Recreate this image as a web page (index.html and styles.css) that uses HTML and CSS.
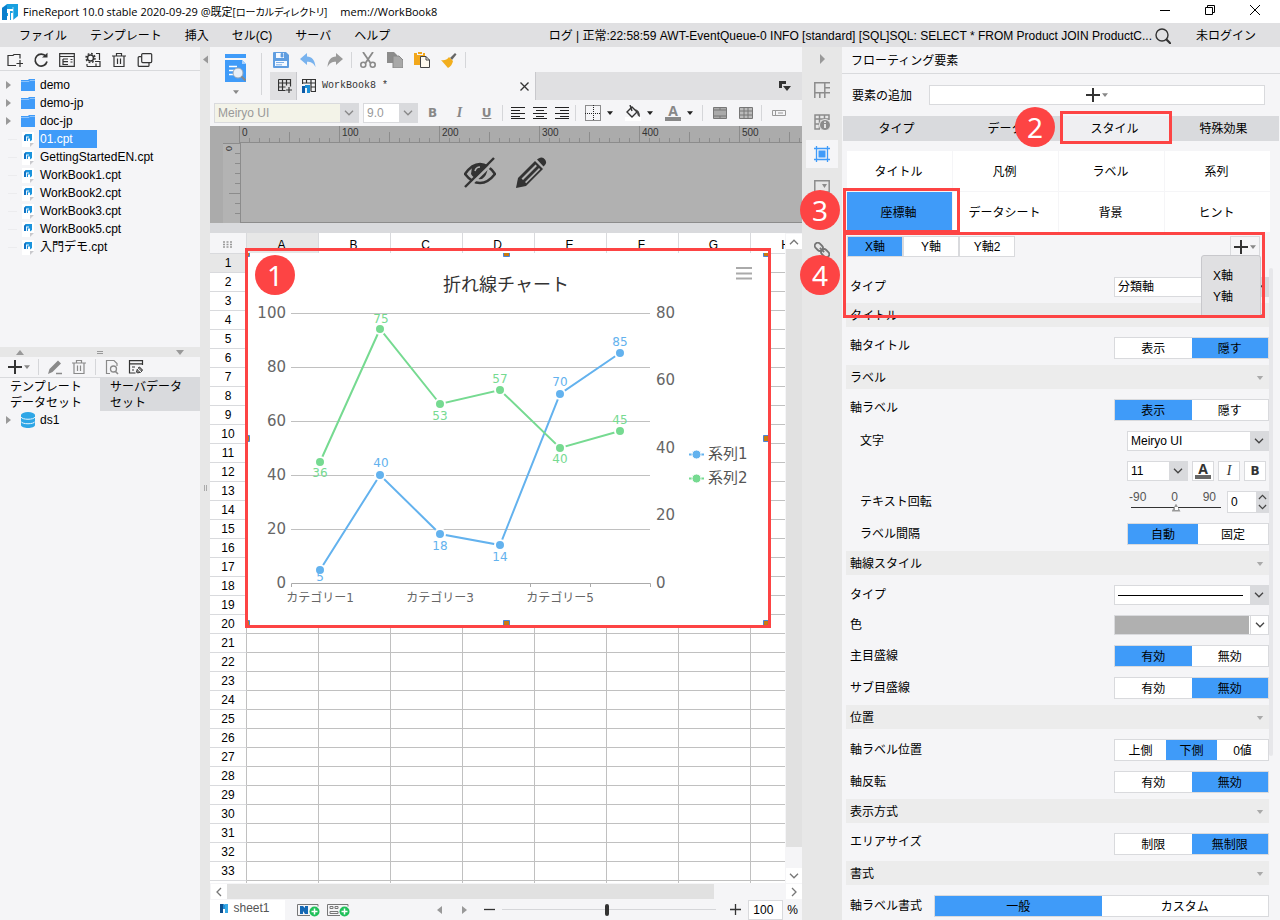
FILE: index.html
```html
<!DOCTYPE html>
<html lang="ja">
<head>
<meta charset="utf-8">
<title>FineReport 10.0</title>
<link rel="stylesheet" href="styles.css">
</head>
<body>
<svg class="defs" aria-hidden="true">
  <symbol id="logo" viewBox="0 0 16 16"><path d="M5 0h11v12l-5 4V9H9v7H0V4z" fill="#18a0e0"/><path d="M0 4 5 1v4h3v4H5v7H0z" fill="#0a7dcc"/><path d="M5 5h6v2H8v9H5v-4h1V9H5z" fill="#fff"/><path d="M11 3v13" stroke="#fff" stroke-width=".6"/></symbol>
  <symbol id="folder" viewBox="0 0 14 12"><path d="M0 1h7l1-1h6v12H0z" fill="#3f9bf9"/><path d="M0 2.500h8l1-1h5" stroke="#8cc3fb" fill="none"/></symbol>
  <symbol id="doc" viewBox="0 0 13 15"><path d="M0 0h12v11l-4 4H0z" fill="#fff"/><path d="M2 4 4 2h6v6L8 9.500V6.500H6V9H2z" fill="#1a94dd"/><path d="M2 4l2-2v7H2z" fill="#1273c4"/><path d="M4 4.500h3v1H5V9H4z" fill="#e8f4ff"/><path d="M8 11h4l-4 4z" fill="#c8c8cc"/></symbol>
  <symbol id="chev" viewBox="0 0 10 6"><path d="M1 .8 5 4.800 9 .8" fill="none" stroke="currentColor" stroke-width="1.300"/></symbol>
  <symbol id="tri" viewBox="0 0 8 5"><path d="M0 0h8L4 5z" fill="currentColor"/></symbol>
  <symbol id="trash" viewBox="0 0 16 16"><path d="M1 4h14M5.500 4V1.500h5V4M3 4v10.500h10V4M6.500 6.500v5.500M9.500 6.500v5.500" fill="none" stroke="currentColor" stroke-width="1.200"/></symbol>
  <symbol id="plus" viewBox="0 0 14 14"><path d="M7 0v14M0 7h14" stroke="#333" stroke-width="2"/></symbol>
  <symbol id="addsheet" viewBox="0 0 24 14"><path d="M21 1.500H.5v11H13M21 1.500v2" fill="none" stroke="#777"/><circle cx="17.500" cy="8.500" r="5" fill="#1fc05a"/><path d="M17.500 5.500v6M14.500 8.500h6" stroke="#fff" stroke-width="1.500"/></symbol>
</svg>
<div class="app">
  <header class="titlebar">
    <svg class="titlebar__logo"><use href="#logo"/></svg>
    <span class="titlebar__text">FineReport 10.0 stable 2020-09-29 @既定<small>[ローカルディレクトリ]</small></span>
    <span class="titlebar__text">mem://WorkBook8</span>
    <div class="winctl">
      <button aria-label="最小化"><svg viewBox="0 0 10 10"><path d="M0 5.500h10" stroke="#000"/></svg></button>
      <button aria-label="元に戻す"><svg viewBox="0 0 10 10"><path d="M.5 2.500h7v7h-7zM2.500 2.500v-2h7v7h-2" fill="none" stroke="#000"/></svg></button>
      <button aria-label="閉じる"><svg viewBox="0 0 10 10"><path d="M0 0l10 10M10 0 0 10" stroke="#000"/></svg></button>
    </div>
  </header>
  <nav class="menubar">
    <button>ファイル</button><button>テンプレート</button><button>挿入</button><button>セル(C)</button><button>サーバ</button><button>ヘルプ</button>
    <span class="menubar__log">ログ | 正常:22:58:59 AWT-EventQueue-0 INFO [standard] [SQL]SQL: SELECT * FROM Product JOIN ProductC...</span>
    <button class="menubar__search" aria-label="検索"><svg viewBox="0 0 16 16"><circle cx="7" cy="7" r="6" fill="none" stroke="#333" stroke-width="1.400"/><path d="m11 11 5 5" stroke="#333" stroke-width="2.200"/></svg></button>
    <button>未ログイン</button>
  </nav>

  <div class="main">
    <aside class="left">
      <div class="lefttools">
        <button aria-label="新規フォルダ"><svg viewBox="0 0 16 16"><path d="M9 13.500H1V3.500h5l1-1h6v4M1 3.500M13 8v7M9.500 11.500h7" fill="none" stroke="#333" stroke-width="1.200"/></svg></button>
        <button aria-label="更新"><svg viewBox="0 0 16 16"><path d="M13 4.500A6 6 0 1 0 14 9.500" fill="none" stroke="#333" stroke-width="1.700"/><path d="M9 5.500h5.500V.8z" fill="#333"/></svg></button>
        <button aria-label="場所"><svg viewBox="0 0 16 16"><path d="M.7 1.700h14.600v12.600H.7zM.7 4.500h14.600M4 7h5M4 7v5.500h5M4 9.700h5M11.500 7.500h2M11.500 10h2" fill="none" stroke="#333" stroke-width="1.200"/></svg></button>
        <button aria-label="設定"><svg viewBox="0 0 16 16"><circle cx="5.500" cy="6" r="3" fill="none" stroke="#333" stroke-width="1.500"/><circle cx="5.500" cy="6" r="4.500" fill="none" stroke="#333" stroke-width="1.500" stroke-dasharray="1.800 1.730"/><path d="M11 1.500h3.500V8M10 9.500h5v5H2M11 14.500v-3M2 12v2.500" fill="none" stroke="#333" stroke-width="1.200"/></svg></button>
        <button aria-label="削除"><svg class="dark"><use href="#trash"/></svg></button>
        <button aria-label="複製"><svg viewBox="0 0 16 16"><rect x="4.700" y="1.600" width="10" height="9" rx="1" fill="none" stroke="#333" stroke-width="1.200"/><path d="M4.500 4.600H2.200a1 1 0 0 0-1 1v7.800a1 1 0 0 0 1 1H11a1 1 0 0 0 1-1v-2.500" fill="none" stroke="#333" stroke-width="1.200"/></svg></button>
      </div>
      <ul class="tree tree--files">
        <li><i class="twist"></i><svg class="ico-folder"><use href="#folder"/></svg><span>demo</span></li>
        <li><i class="twist"></i><svg class="ico-folder"><use href="#folder"/></svg><span>demo-jp</span></li>
        <li><i class="twist"></i><svg class="ico-folder"><use href="#folder"/></svg><span>doc-jp</span></li>
        <li><i class="stub"></i><svg class="ico-doc"><use href="#doc"/></svg><span class="is-selected">01.cpt</span></li>
        <li><i class="stub"></i><svg class="ico-doc"><use href="#doc"/></svg><span>GettingStartedEN.cpt</span></li>
        <li><i class="stub"></i><svg class="ico-doc"><use href="#doc"/></svg><span>WorkBook1.cpt</span></li>
        <li><i class="stub"></i><svg class="ico-doc"><use href="#doc"/></svg><span>WorkBook2.cpt</span></li>
        <li><i class="stub"></i><svg class="ico-doc"><use href="#doc"/></svg><span>WorkBook3.cpt</span></li>
        <li><i class="stub"></i><svg class="ico-doc"><use href="#doc"/></svg><span>WorkBook5.cpt</span></li>
        <li><i class="stub"></i><svg class="ico-doc"><use href="#doc"/></svg><span>入門デモ.cpt</span></li>
      </ul>
      <div class="hsplit"><svg class="flip"><use href="#tri"/></svg><b></b><svg><use href="#tri"/></svg></div>
      <div class="datatools">
        <button class="addbtn" aria-label="追加"><svg class="plus"><use href="#plus"/></svg><svg class="caret"><use href="#tri"/></svg></button>
        <i class="sep"></i>
        <button aria-label="編集"><svg viewBox="0 0 16 16"><path d="m1 15 1.500-5L11 1.500l3 3L5.500 13z" fill="#8a8a8a"/><path d="M9 14.500h6" stroke="#8a8a8a" stroke-width="1.500"/></svg></button>
        <button aria-label="削除"><svg class="grey"><use href="#trash"/></svg></button>
        <i class="sep"></i>
        <button aria-label="プレビュー"><svg viewBox="0 0 16 16"><path d="M6 14.500H2.500V1.500H10l3 3V7" fill="none" stroke="#8a8a8a" stroke-width="1.200"/><circle cx="9.500" cy="10" r="3" fill="none" stroke="#8a8a8a" stroke-width="1.300"/><path d="m11.500 12.500 2.500 2.500" stroke="#8a8a8a" stroke-width="1.600"/></svg></button>
        <button aria-label="接続"><svg viewBox="0 0 16 16"><path d="M14.500 6V1.700H1.500V14h6M1.500 4.800h13M4 8h3M4 11h2" fill="none" stroke="#333" stroke-width="1.200"/><path d="m8.500 13 1-3.500 2-1.500 3 3-1.500 2-3.500 1z" fill="#888" stroke="#333"/><path d="m9 9 5 5" stroke="#f5f5f7"/></svg></button>
      </div>
      <div class="datatabs"><button>テンプレート<br>データセット</button><button class="is-off">サーバデータ<br>セット</button></div>
      <ul class="tree">
        <li><i class="twist"></i><svg class="ico-db" viewBox="0 0 14 16"><path d="M0 3v10c0 4 14 4 14 0V3z" fill="#2ea6e6"/><ellipse cx="7" cy="3" rx="7" ry="3" fill="#2ea6e6"/><path d="M0 5c1 3 13 3 14 0M0 9.500c1 3 13 3 14 0" fill="none" stroke="#e8f5fd"/></svg><span>ds1</span></li>
      </ul>
    </aside>
    <div class="vsplit"><svg viewBox="0 0 5 8"><path d="M5 0v8L0 4z" fill="#999"/></svg><b></b></div>

    <section class="center">
      <div class="topbar">
        <button class="preview" aria-label="プレビュー">
          <svg class="preview__icon" viewBox="0 0 21 28"><path d="M0 0h21v4H0zM0 6h17l4 4v18H0z" fill="#3f9bf9"/><path d="M17 6v4h4z" fill="#a9d1fd"/><path d="M4 12.500h8M4 16.500h5M4 20.500h5" stroke="#fff" stroke-width="1.500"/><circle cx="13" cy="19" r="5" fill="#e8eef6" stroke="#9aa7b8"/><path d="m16.500 22.500 4 4" stroke="#888" stroke-width="2"/></svg>
          <svg class="caret"><use href="#tri"/></svg>
        </button>
        <i class="topbar__sep"></i>
        <div class="topbar__rows">
          <div class="tools">
            <button aria-label="保存"><svg viewBox="0 0 16 16"><path d="M0 1q0-1 1-1h12l3 3v12q0 1-1 1H1q-1 0-1-1z" fill="#5f9de0"/><path d="M3 1h8v5H3zM2 9h12v5H2z" fill="#f5f9ff"/><path d="M8 1.500h2V5H8zM3 10.500h8M3 12.800h6" fill="#5f9de0" stroke="#5f9de0" stroke-width=".8"/></svg></button>
            <button aria-label="元に戻す"><svg viewBox="0 0 16 16"><path d="M0 7 7 1v3.500c5 0 8 4 8.500 10.500C13.500 11 11 9.700 7 9.700V13z" fill="#78b2ee"/></svg></button>
            <button aria-label="やり直し"><svg viewBox="0 0 16 16"><path d="M16 7 9 1v3.500C4 4.500 1 8.500.5 15 2.500 11 5 9.700 9 9.700V13z" fill="#9a9a9a"/></svg></button>
            <i class="sep"></i>
            <button aria-label="切り取り"><svg viewBox="0 0 16 16"><path d="m3 0 7.500 11M13 0 5.500 11" stroke="#8a8a8a" stroke-width="1.800"/><circle cx="3.300" cy="12.700" r="2.500" fill="none" stroke="#8a8a8a" stroke-width="1.600"/><circle cx="12.700" cy="12.700" r="2.500" fill="none" stroke="#8a8a8a" stroke-width="1.600"/></svg></button>
            <button aria-label="コピー"><svg viewBox="0 0 16 16"><path d="M0 0h7l3 3v8H0z" fill="#8c8c8c"/><path d="M6 4h6l4 4v8H6z" fill="#a8a8a8" stroke="#888"/></svg></button>
            <button aria-label="貼り付け"><svg viewBox="0 0 16 16"><path d="M0 1h3v2h6V1h2v12H0z" fill="#f2a71b"/><path d="M4 0h4v2H4z" fill="#f2a71b"/><path d="M6.500 4.500H12L15.500 8v7.500h-9z" fill="#fffaf0" stroke="#444"/><path d="M12 4.500V8h3.500" fill="none" stroke="#444"/></svg></button>
            <button aria-label="書式コピー"><svg viewBox="0 0 16 16"><path d="m9 6 5-5 1.500 1.500L11 8z" fill="#666"/><path d="M0 8q5 1 8-3l4 4q-1 5-5 7z" fill="#f2ae1d"/></svg></button>
            <i class="sep"></i>
          </div>
          <div class="tabs">
            <button class="tabs__new" aria-label="新規"><svg viewBox="0 0 14 14"><path d="M.5.5h12v7M.5.5v11h7M.5 4h12M.5 8h7M4.500.5v11M8.500.5v6M11 8v6M8 11h6" fill="none" stroke="#333" stroke-width="1.200"/></svg></button>
            <div class="tab"><svg viewBox="0 0 14 14"><path d="M.5 5V.5h13v12H9M.5 4h13M9 8h4M4.500.5V4M9 .5v12" fill="none" stroke="#333" stroke-width="1.200"/><path d="M0 7h3v7H0z" fill="#0c5ba8"/><path d="M3 9V6h5v8H5V9z" fill="#1c8fd6"/></svg><span class="tab__name">WorkBook8 *</span><button aria-label="閉じる"><svg class="tab__x" viewBox="0 0 9 9"><path d="m.5.5 8 8M8.500.5l-8 8" stroke="#333" stroke-width="1.300"/></svg></button></div>
            <button class="tabs__list" aria-label="一覧"><svg viewBox="0 0 12 10"><path d="M0 0h7v3H3v4H0zM4 5h8l-4 5z" fill="#333"/></svg></button>
          </div>
        </div>
      </div>
      <div class="format">
        <span class="combo combo--font"><select aria-label="フォント"><option>Meiryo UI</option></select><svg><use href="#chev"/></svg></span>
        <span class="combo combo--size"><select aria-label="サイズ"><option>9.0</option></select><svg><use href="#chev"/></svg></span>
        <button class="letter" aria-label="太字"><b>B</b></button><button class="letter" aria-label="斜体"><em>I</em></button><button class="letter" aria-label="下線"><u>U</u></button>
        <i class="sep"></i>
        <button class="al" aria-label="左揃え"><svg viewBox="0 0 14 12"><path d="M0 .5h14M0 3.500h9M0 6.500h14M0 9.500h9M0 11.500h14" stroke="#222"/></svg></button>
        <button class="al" aria-label="中央揃え"><svg viewBox="0 0 14 12"><path d="M0 .5h14M3 3.500h8M0 6.500h14M3 9.500h8M0 11.500h14" stroke="#222"/></svg></button>
        <button class="al" aria-label="右揃え"><svg viewBox="0 0 14 12"><path d="M0 .5h14M5 3.500h9M0 6.500h14M5 9.500h9M0 11.500h14" stroke="#222"/></svg></button>
        <i class="sep"></i>
        <button class="drop" aria-label="罫線"><svg viewBox="0 0 16 16"><path d="M.5.500h15v15H.5zM8.500 0v16M0 8.500h16" fill="none" stroke="#222" stroke-dasharray="1 1"/></svg><svg class="caret"><use href="#tri"/></svg></button>
        <button class="drop" aria-label="塗りつぶし"><svg viewBox="0 0 16 16"><path d="M0 12h16v4H0z" fill="#fff"/><path d="m2 7 5-5 5 5-5 5zM5 0l2 6" fill="none" stroke="#333" stroke-width="1.400"/><path d="M10 4q5 1 5 8-3-1-3-5z" fill="#444"/></svg><svg class="caret"><use href="#tri"/></svg></button>
        <button class="drop" aria-label="文字色"><span class="fontcolor">A</span><svg class="caret"><use href="#tri"/></svg></button>
        <i class="sep"></i>
        <button class="cellbtn" aria-label="結合"><svg viewBox="0 0 14 12"><path d="M.5.500h13v11H.5z" fill="#aaa" stroke="#777"/><path d="M0 3h14M0 9h14M7 0v3M7 9v3" stroke="#777"/></svg></button>
        <button class="cellbtn" aria-label="分割"><svg viewBox="0 0 14 12"><path d="M.5.500h13v11H.5z" fill="#bbb" stroke="#777"/><path d="M0 4h14M0 8h14M5 0v12M9 0v12" stroke="#777"/></svg></button>
        <i class="sep"></i>
        <button class="cellbtn" aria-label="ウィジェット"><svg viewBox="0 0 14 12"><path d="M.5 3.500h13v5H.5zM3.500 4v4M6 6h5" fill="none" stroke="#999"/></svg></button>
      </div>

      <div class="stage">
        <div class="ruler">
          <svg class="ruler__ticks" aria-hidden="true">
            <defs><pattern id="hticks" width="100" height="17" patternUnits="userSpaceOnUse"><path d="M.5 0v17M10.500 12v5M20.500 12v5M30.500 12v5M40.500 12v5M50.500 6v11M60.500 12v5M70.500 12v5M80.500 12v5M90.500 12v5" stroke="#8c8c8c"/></pattern></defs>
            <rect width="100%" height="17" fill="url(#hticks)"/>
          </svg>
          <div class="ruler__nums"><span>0</span><span>100</span><span>200</span><span>300</span><span>400</span><span>500</span></div>
        </div>
        <div class="stage__row">
          <svg class="vruler" viewBox="0 0 17 80" preserveAspectRatio="xMinYMin slice"><path d="M0 .5h17M12 10.500h5M12 20.500h5M12 30.500h5M12 40.500h5M6 50.500h11M12 60.500h5M12 70.500h5" stroke="#8c8c8c"/><text class="vruler__num" transform="translate(9 3) rotate(-90)" text-anchor="end">0</text></svg>
          <div class="stage__body">
            <button aria-label="非表示"><svg viewBox="0 0 32 32"><path d="M1 17Q8 7 16 7t15 10q-7 9-15 9T1 17z" fill="none" stroke="#333" stroke-width="2.600"/><path d="M8 10q8-6 16 0-1 9-6 12-8 1-11-5z" fill="#333"/><path d="M11 14q1-4 5-4" fill="none" stroke="#b1b1b1" stroke-width="1.500"/><path d="M3 31 32 3" stroke="#b1b1b1" stroke-width="3"/><path d="M1 30 30 1" stroke="#333" stroke-width="2.400"/></svg></button>
            <button aria-label="編集"><svg viewBox="0 0 32 32"><path d="m1 31 2-10L20 4l8 8L11 29z" fill="#333"/><path d="m6.500 21.500 14-14 1.500 1.500-14 14zM10 25l14-14 1.200 1.200-14 14z" fill="#b1b1b1"/><path d="m22 2.500 1.500-1q4-2.500 6.500 1t-.5 6l-1 1z" fill="#333"/></svg></button>
          </div>
        </div>
      </div>

      <div class="sheetarea">
        <div class="sheet">
          <table class="grid" id="grid"></table>
          <div class="float">
            <svg class="chart" viewBox="246 253 524 374" role="img" aria-label="折れ線チャート">
              <rect x="246" y="253" width="524" height="374" fill="#fff"/>
              <path d="M736 268h16M736 273.500h16M736 278.500h16" stroke="#aaa" stroke-width="1.800"/>
              <text class="chart__title" x="506" y="291">折れ線チャート</text>
              <path d="M291 313.500h359M291 367.500h359M291 421.500h359M291 475.500h359M291 529.500h359" stroke="#c0c0c0"/>
              <path d="M291.500 587v-3.500h359v3.500M530.500 583v4M590.500 583v4" stroke="#aaa" fill="none"/>
              <g class="chart__axis chart__axis--l"><text x="286" y="318">100</text><text x="286" y="372">80</text><text x="286" y="426">60</text><text x="286" y="480">40</text><text x="286" y="534">20</text><text x="286" y="588">0</text></g>
              <g class="chart__axis"><text x="656" y="318">80</text><text x="656" y="385">60</text><text x="656" y="453">40</text><text x="656" y="520">20</text><text x="656" y="588">0</text></g>
              <g class="chart__cat"><text x="320" y="602">カテゴリー1</text><text x="440" y="602">カテゴリー3</text><text x="560" y="602">カテゴリー5</text></g>
              <g class="blue"><polyline points="320,570 380,475 440,534 500,545 560,394 620,353"/><circle cx="320" cy="570" r="5"/><circle cx="380" cy="475" r="5"/><circle cx="440" cy="534" r="5"/><circle cx="500" cy="545" r="5"/><circle cx="560" cy="394" r="5"/><circle cx="620" cy="353" r="5"/>
                <text x="320" y="581">5</text><text x="381" y="467">40</text><text x="440" y="550">18</text><text x="500" y="561">14</text><text x="560" y="386">70</text><text x="620" y="346">85</text></g>
              <g class="green"><polyline points="320,462 380,329 440,404 500,390 560,448 620,431"/><circle cx="320" cy="462" r="5"/><circle cx="380" cy="329" r="5"/><circle cx="440" cy="404" r="5"/><circle cx="500" cy="390" r="5"/><circle cx="560" cy="448" r="5"/><circle cx="620" cy="431" r="5"/>
                <text x="320" y="477">36</text><text x="381" y="323">75</text><text x="440" y="420">53</text><text x="500" y="383">57</text><text x="560" y="463">40</text><text x="620" y="424">45</text></g>
              <path d="M689 454.500h15" stroke="#63b2ee" stroke-width="2"/><circle cx="696.500" cy="454.500" r="4.500" fill="#63b2ee" stroke="#fff"/><text class="chart__legend" x="708" y="459">系列1</text>
              <path d="M689 478.500h15" stroke="#76da91" stroke-width="2"/><circle cx="696.500" cy="478.500" r="4.500" fill="#76da91" stroke="#fff"/><text class="chart__legend" x="708" y="483">系列2</text>
              <g fill="#c87a10" stroke="#4a86d8"><path d="M243.500 250.500h6v6h-6zM503.500 250.500h6v6h-6zM763.500 250.500h6v6h-6zM243.500 435.500h6v6h-6zM763.500 435.500h6v6h-6zM243.500 620.500h6v6h-6zM503.500 620.500h6v6h-6zM763.500 620.500h6v6h-6z"/></g>
            </svg>
            <div class="mark mark--chart"></div>
            <span class="badge badge--1">1</span>
          </div>
        </div>
        <div class="vscroll"><button aria-label="上"><svg class="flip"><use href="#chev"/></svg></button><i></i><button aria-label="下"><svg><use href="#chev"/></svg></button></div>
      </div>
      <div class="hscroll"><button aria-label="左"><svg viewBox="0 0 6 10"><path d="M5 1 1 5l4 4" fill="none" stroke="#777" stroke-width="1.300"/></svg></button><i></i><button aria-label="右"><svg viewBox="0 0 6 10"><path d="m1 1 4 4-4 4" fill="none" stroke="#777" stroke-width="1.300"/></svg></button></div>
      <footer class="status">
        <button class="sheettab"><svg viewBox="0 0 8 9"><path d="M0 0h4l4 3v6H5V5H3v4H0z" fill="#1f8fd8"/><path d="M0 0h3v9H0z" fill="#0c5090"/><path d="M5 0h3v9H5z" fill="#38a8e4"/></svg>sheet1</button>
        <button class="addsheet" aria-label="シート追加"><svg viewBox="0 0 24 14"><use href="#addsheet"/><path d="M3 3h3l2 2V3h3v8H8L6 8v3H3z" fill="#1468b4"/></svg></button>
        <button class="addsheet" aria-label="フォーム追加"><svg viewBox="0 0 24 14"><use href="#addsheet"/><path d="M3 3.500h3v2H3zM8 3.500h3v2H8zM3 8.500h8v2H3z" fill="none" stroke="#777"/></svg></button>
        <div class="status__nav"><button aria-label="前"><svg viewBox="0 0 5 8"><path d="M5 0v8L0 4z" fill="#999"/></svg></button><button aria-label="次"><svg viewBox="0 0 5 8"><path d="M0 0v8l5-4z" fill="#999"/></svg></button></div>
        <div class="zoom"><button aria-label="縮小"><svg viewBox="0 0 11 11"><path d="M0 5.500h11" stroke="#333" stroke-width="1.300"/></svg></button><input type="range" min="0" max="200" value="98" aria-label="ズーム"><button aria-label="拡大"><svg viewBox="0 0 11 11"><path d="M0 5.500h11M5.500 0v11" stroke="#333" stroke-width="1.300"/></svg></button><input class="zoom__val" type="text" value="100" aria-label="倍率"><span>%</span></div>
      </footer>
    </section>

    <nav class="strip">
      <svg class="strip__arrow" viewBox="0 0 5 10"><path d="M0 0v10l5-5z" fill="#999"/></svg>
      <button aria-label="セル要素"><svg viewBox="0 0 16 16"><path d="M.8 16V.8H16M.8 10.800H16M10.800.8V16M10.800 5.800H16M5.800 10.800V16" fill="none" stroke="#8c8c8c" stroke-width="1.500"/></svg></button>
      <button aria-label="セル属性"><svg viewBox="0 0 16 16"><path d="M15 6V1H1v14h5M1 5h14M1 10h5M5.500 1v14M10.500 1v5" fill="none" stroke="#8c8c8c" stroke-width="1.500"/><circle cx="11" cy="11" r="5.500" fill="#8c8c8c" stroke="#e7e7e7"/><path d="M11 10v4M11 7.500v1.500" stroke="#fff" stroke-width="1.500"/></svg></button>
      <button class="is-active" aria-label="フローティング要素"><svg viewBox="0 0 16 16"><path d="M0 2.500h16M0 13.500h16M2.500 0v16M13.500 0v16" stroke="#3f9bf9" stroke-width="1.300"/><path d="M4.500 4.500h7v7h-7z" fill="#3f9bf9"/></svg></button>
      <button aria-label="ウィジェット"><svg viewBox="0 0 16 16"><path d="M.8 2.800h14.400V14H.8z" fill="none" stroke="#8c8c8c" stroke-width="1.500"/><path d="M8 6h5l-2.500 4z" fill="#8c8c8c"/></svg></button>
      <button aria-label="条件属性"><svg viewBox="0 0 16 16"><path d="M1 3h14v10H1z" fill="none" stroke="#8c8c8c"/></svg></button>
      <button aria-label="ハイパーリンク"><svg viewBox="0 0 16 16"><g fill="none" stroke="#757575" stroke-width="1.800" transform="rotate(45 8 8)"><rect x="-1" y="5" width="9" height="6" rx="3"/><rect x="8" y="5" width="9" height="6" rx="3"/><path d="M5 8h6"/></g></svg></button>
    </nav>

    <aside class="panel">
      <h2 class="panel__head">フローティング要素</h2>
      <div class="panel__add"><span>要素の追加</span><button aria-label="要素の追加"><svg class="plus"><use href="#plus"/></svg><svg class="caret"><use href="#tri"/></svg></button></div>
      <div class="ptabs"><button>タイプ</button><button>データ</button><button class="is-active">スタイル</button><button>特殊効果</button></div>
      <div class="pgrid"><button>タイトル</button><button>凡例</button><button>ラベル</button><button>系列</button><button class="is-active">座標軸</button><button>データシート</button><button>背景</button><button>ヒント</button></div>
      <div class="axisbar"><div class="axisbar__tabs"><button class="is-active">X軸</button><button>Y軸</button><button>Y軸2</button></div><button class="axisbar__add" aria-label="軸の追加"><svg class="plus"><use href="#plus"/></svg><svg class="caret"><use href="#tri"/></svg></button></div>
      <div class="pscroll">
        <div class="settings">
          <div class="row row--first"><label for="axtype">タイプ</label><span class="combo w155"><select id="axtype"><option>分類軸</option></select><svg><use href="#chev"/></svg></span></div>
          <h3>タイトル<svg><use href="#tri"/></svg></h3>
          <div class="row row--top"><span>軸タイトル</span><div class="seg"><button>表示</button><button class="is-active">隠す</button></div></div>
          <h3>ラベル<svg><use href="#tri"/></svg></h3>
          <div class="row row--top"><span>軸ラベル</span><div class="seg"><button class="is-active">表示</button><button>隠す</button></div></div>
          <div class="row row--sub"><label for="axfont">文字</label><span class="combo w142"><select id="axfont"><option>Meiryo UI</option></select><svg><use href="#chev"/></svg></span></div>
          <div class="row row--font"><span class="combo w61"><select aria-label="文字サイズ"><option>11</option></select><svg><use href="#chev"/></svg></span><button class="sq" aria-label="文字色"><span class="fontcolor">A</span></button><button class="sq" aria-label="斜体"><em>I</em></button><button class="sq" aria-label="太字"><b>B</b></button></div>
          <div class="row row--sub"><label for="rot">テキスト回転</label><div class="rot"><div class="rot__slide"><div class="rot__nums"><span>-90</span><span>0</span><span>90</span></div><input id="rot" type="range" min="-90" max="90" value="0"></div><div class="spin"><input type="text" value="0" aria-label="角度"><div class="spin__btns"><button aria-label="増やす"><svg class="flip"><use href="#chev"/></svg></button><button aria-label="減らす"><svg><use href="#chev"/></svg></button></div></div></div></div>
          <div class="row row--sub"><span>ラベル間隔</span><div class="seg seg--sub"><button class="is-active">自動</button><button>固定</button></div></div>
          <h3>軸線スタイル<svg><use href="#tri"/></svg></h3>
          <div class="row"><span>タイプ</span><button class="linesel" aria-label="線のタイプ"><i></i><span><svg><use href="#chev"/></svg></span></button></div>
          <div class="row"><span>色</span><button class="linesel linesel--color" aria-label="線の色"><i></i><span><svg><use href="#chev"/></svg></span></button></div>
          <div class="row"><span>主目盛線</span><div class="seg"><button class="is-active">有効</button><button>無効</button></div></div>
          <div class="row"><span>サブ目盛線</span><div class="seg"><button>有効</button><button class="is-active">無効</button></div></div>
          <h3>位置<svg><use href="#tri"/></svg></h3>
          <div class="row"><span>軸ラベル位置</span><div class="seg"><button>上側</button><button class="is-active">下側</button><button>0値</button></div></div>
          <div class="row"><span>軸反転</span><div class="seg"><button>有効</button><button class="is-active">無効</button></div></div>
          <h3>表示方式<svg><use href="#tri"/></svg></h3>
          <div class="row row--top"><span>エリアサイズ</span><div class="seg"><button>制限</button><button class="is-active">無制限</button></div></div>
          <h3>書式<svg><use href="#tri"/></svg></h3>
          <div class="row"><span>軸ラベル書式</span><div class="seg seg--wide"><button class="is-active">一般</button><button>カスタム</button></div></div>
        </div>
        <i class="pscroll__bar"></i>
      </div>
      <div class="popup"><button>X軸</button><button>Y軸</button></div>
      <div class="mark mark--tab"></div><div class="mark mark--grid"></div><div class="mark mark--axis"></div>
      <span class="badge badge--2">2</span><span class="badge badge--3">3</span><span class="badge badge--4">4</span>
    </aside>
  </div>
</div>
<script src="sheet.js"></script>
</body>
</html>
```
FILE: styles.css
```css
*{box-sizing:border-box}
body{margin:0;font:12px/18px "Liberation Sans","Noto Sans CJK JP",sans-serif;color:#000;background:#f5f5f7}
button,input,select{font:inherit;color:inherit;margin:0;padding:0;border:0;background:none;border-radius:0}
button{display:flex;align-items:center;justify-content:center;white-space:nowrap}
svg{display:block;flex:none;width:16px;height:16px}
ul,h2,h3{margin:0;padding:0;list-style:none;font:inherit}
.defs{position:absolute;width:0;height:0}
.flip{transform:scaleY(-1)}
.plus{width:14px;height:14px}
.caret{width:6px;height:4px;color:#888}
.sep{width:1px;height:16px;background:#d5d6d9;flex:none}
.dark{color:#333}
.grey{color:#8a8a8a}

.app{height:100vh;display:flex;flex-direction:column;overflow:hidden}
.titlebar{flex:none;height:23px;background:#fff;display:flex;align-items:center;padding:0 20px 0 2px;font-family:"Open Sans","Noto Sans CJK JP",sans-serif;font-size:11px}
.titlebar small{font-size:10px}
.titlebar__logo{margin-right:5px}
.titlebar__text{margin-right:13px;white-space:nowrap;font-feature-settings:"palt"}
.winctl{margin-left:auto;display:flex;gap:35px;padding-bottom:3px}
.winctl svg{width:10px;height:10px}
.menubar{flex:none;height:24px;background:#e0e0e2;display:flex;align-items:center;padding:1px 24px 0 19px;gap:23px}
.menubar__log{margin-left:auto;margin-right:-20px;white-space:nowrap}
.menubar__search{margin-right:2px}
.main{flex:1;min-height:0;display:flex}

.left{flex:none;width:200px;display:flex;flex-direction:column}
.lefttools{height:24px;border-bottom:1px solid #d9dadd;display:flex;align-items:center;gap:10px;padding:2px 7px 0}
.tree li{height:18px;display:flex;align-items:center}
.tree--files{flex:0 0 276px;padding-top:5px}
.twist{width:15px;height:8px;margin-left:6px;flex:none}
.twist::before{content:"";display:block;width:5px;height:8px;background:#999;clip-path:polygon(0 0,100% 50%,0 100%)}
.stub{width:9px;height:1px;margin:0 5px 0 8px;background:#ececee;flex:none}
.ico-folder{width:14px;height:12px;margin-right:4px}
.ico-doc{width:13px;height:15px;margin-right:4px}
.ico-db{width:14px;margin-right:4px}
.tree span{padding:0 1px;white-space:nowrap}
.tree .is-selected{background:#3f9bf9;color:#fff;padding-right:24px}
.hsplit{height:10px;background:#e7e7e7;display:flex;align-items:center;justify-content:space-between;padding:0 15px;color:#999}
.hsplit svg{width:10px;height:5px}
.hsplit b{width:6px;height:3px;border:solid #999;border-width:1px 0}
.datatools{height:21px;border-bottom:1px solid #d9dadd;display:flex;align-items:center;gap:8px;padding:0 8px}
.addbtn{gap:2px}
.datatabs{display:flex;height:33px}
.datatabs button{flex:1;text-align:left;justify-content:flex-start;line-height:16px;padding-left:10px}
.datatabs .is-off{background:#d9dadd}
.vsplit{flex:none;width:10px;background:#e7e7e7;display:flex;flex-direction:column;align-items:center;padding-top:8px}
.vsplit svg{width:5px;height:9px}
.vsplit b{width:3px;height:6px;border:solid #aaa;border-width:0 1px;margin-top:421px}

.center{flex:1;min-width:0;display:flex;flex-direction:column}
.topbar{flex:none;display:flex;height:53px}
.preview{width:51px;flex-direction:column;justify-content:flex-start;gap:8px;padding-top:7px}
.preview__icon{width:21px;height:28px}
.topbar__sep{width:1px;height:42px;margin:6px 8px 0 0;background:#d5d6d9}
.topbar__rows{flex:1;min-width:0}
.tools{height:25px;display:flex;align-items:center;gap:11px;padding-left:3px}
.tools .sep{margin:0 -3px}
.tabs{height:28px;background:#e0e0e2;display:flex}
.tabs__new{width:27px;border-right:1px solid #c8c8cc;padding-left:4px}
.tabs svg{width:14px;height:14px}
.tab{width:239px;background:#f5f5f7;border-right:1px solid #c8c8cc;display:flex;align-items:center;padding:0 6px 0 5px;gap:6px}
.tab__name{font-family:"Liberation Mono",monospace;font-size:10px;color:#333}
.tab button{margin-left:auto}
.tabs .tab__x{width:9px;height:9px}
.tabs__list{margin-left:auto;padding:0 11px}
.tabs .tabs__list svg{width:12px;height:10px}
.format{flex:none;height:26px;display:flex;align-items:center;padding-left:4px}
.combo{display:grid;grid-template-columns:minmax(0,1fr) 18px;height:20px;border:1px solid #d9dadd;background:#fff}
.combo select{grid-area:1/1/2/3;appearance:none;padding-left:3px;background:linear-gradient(#d9dadd,#d9dadd) right/18px 100% no-repeat}
.combo svg{grid-area:1/2;width:10px;height:6px;place-self:center;pointer-events:none;color:#444}
.combo--font{width:145px;background:#f3f3e8;color:#999}
.combo--size{width:55px;margin-left:4px;color:#999}
.format .combo svg{color:#888}
.letter{width:27px;color:#888;font:bold 12px/16px "DejaVu Sans",sans-serif}
.letter em,.sq em{font-family:"Liberation Serif",serif;font-size:14px}
.letter:first-of-type{margin-left:1px}
.format .sep{margin:0 4px 0 2px}
.al{width:22px}
.al svg,.cellbtn svg{width:14px;height:12px}
.drop{width:40px;gap:6px;padding-right:2px}
.drop .caret{color:#222}
.fontcolor{width:16px;border-bottom:4px solid #888;color:#888;font:bold 14px/12px "Open Sans",sans-serif;text-align:center}
.cellbtn{width:26px}

.stage{flex:none;height:107px;background:#ababab;border-bottom:10px solid #d9dadd;display:flex;flex-direction:column}
.ruler{height:17px;margin-left:29px;display:grid;border-bottom:1px solid #8c8c8c}
.ruler__ticks{grid-area:1/1;width:100%;height:17px}
.ruler__nums{grid-area:1/1;display:flex;overflow:hidden;font-size:10px;line-height:14px;color:#333}
.ruler__nums span{flex:0 0 100px;padding-left:3px}
.stage__row{flex:1;min-height:0;display:flex}
.vruler{width:17px;height:80px;margin-left:13px;background:#b3b3b3}
.vruler__num{font-size:9px;fill:#333}
.stage__body{flex:1;background:#b1b1b1;border:solid #8c8c8c;border-width:0 0 1px 1px;display:flex;align-items:flex-start;justify-content:center;gap:19px;padding:14px 32px 0 0}
.stage__body svg{width:32px;height:32px}

.sheetarea{flex:1;min-height:0;display:flex;background:#fff}
.sheet{flex:1;min-width:0;position:relative;overflow:hidden}
.grid{table-layout:fixed;width:613px;border-spacing:0}
.grid th,.grid td{height:19px;padding:0;line-height:16px;border:solid #c0c0c0;border-width:0 1px 1px 0;font-weight:normal;text-align:center}
.grid th{border-color:#d9dadd}
.grid thead th{height:21px;padding:3px 2px 0 0;width:72px}
.grid thead th:first-child{width:37px;background:#f5f5f7}
.grid .is-cur{background:#e7e7e7}
.grid tbody th{border-right-color:#c0c0c0}
.dots{width:9px;height:7px;margin:0 auto}
.float{position:absolute;left:36px;top:20px;width:524px;height:374px}
.chart{width:100%;height:100%;font-family:"DejaVu Sans","Noto Sans CJK JP",sans-serif}
.chart__title{font-size:18px;text-anchor:middle;fill:#333}
.chart__axis{font-size:15px;fill:#666}
.chart__axis--l{text-anchor:end}
.chart__cat{font-size:12px;text-anchor:middle;fill:#666}
.chart__legend{font-size:15px;fill:#555}
.blue,.green{font-size:12px;text-anchor:middle}
.blue polyline,.green polyline{fill:none;stroke:#63b2ee;stroke-width:2}
.blue circle,.green circle{fill:#63b2ee;stroke:#fff;stroke-width:2}
.blue{fill:#63b2ee}
.green{fill:#76da91}
.green polyline{stroke:#76da91}
.green circle{fill:#76da91}
.vscroll{flex:none;width:17px;background:#f5f5f7;display:flex;flex-direction:column;padding:1px 0 0 1px}
.vscroll button,.hscroll button{flex:none;width:16px;height:15px;background:#fff;color:#777}
.vscroll svg{width:10px;height:6px}
.vscroll i{flex:1;background:#e1e1e1;margin-bottom:21px}
.hscroll{flex:none;height:16px;display:flex;padding:1px 0 0 1px}
.hscroll svg{width:6px;height:10px}
.hscroll i{flex:1;background:#e1e1e1;margin-right:72px}
.status{flex:none;height:21px;display:flex;align-items:center}
.sheettab{width:75px;height:20px;background:#fff;color:#555;gap:5px;padding:0 5px 3px 0}
.sheettab svg{width:8px;height:9px}
.addsheet{margin-left:12px}
.addsheet+.addsheet{margin-left:6px}
.addsheet svg{width:24px;height:14px}
.status__nav{margin-left:auto;padding-left:20px;display:flex;gap:20px}
.status__nav svg{width:5px;height:8px}
.zoom{display:flex;align-items:center;margin-left:17px;padding-right:4px}
.zoom svg{width:11px;height:11px}
.zoom input[type=range]{appearance:none;width:214px;height:12px;margin:0 14px 0 7px;background:linear-gradient(#d5d6d9,#d5d6d9) center/100% 1px no-repeat}
.zoom input::-webkit-slider-thumb{appearance:none;width:4px;height:12px;border-radius:2px;background:#333}
.zoom__val{width:35px;height:20px;border:1px solid #d9dadd;background:#fff;margin:0 4px 0 7px;padding-left:4px}

.strip{flex:none;width:40px;background:#e7e7e7;display:flex;flex-direction:column;align-items:center;gap:4px;padding-top:7px}
.strip__arrow{width:5px;height:10px;margin-bottom:8px}
.strip button{width:32px;height:28px}
.strip .is-active{background:#f5f5f7}

.panel{flex:none;width:438px;position:relative;display:flex;flex-direction:column}
.panel__head{height:27px;line-height:28px;padding-left:9px;border-bottom:1px solid #d9dadd}
.panel__add{height:42px;display:flex;align-items:center;padding:1px 15px 2px 10px}
.panel__add span{width:77px;padding-top:2px}
.panel__add button{flex:1;height:20px;border:1px solid #d9dadd;background:#fff;gap:2px}
.ptabs{display:grid;grid-template-columns:repeat(4,1fr);height:25px;margin:0 1px;background:#d9dadd}
.ptabs button{padding-right:2px}
.ptabs .is-active{background:#efeff2}
.pgrid{display:grid;grid-template-columns:repeat(4,1fr);grid-auto-rows:40px;gap:1px;margin:10px 10px 0 5px}
.pgrid button{background:#fff;padding:2px 2px 0 0}
.pgrid .is-active,.axisbar .is-active,.seg .is-active{background:#3f9bf9}
.axisbar{display:flex;justify-content:space-between;padding:4px 20px 0 5px}
.axisbar__tabs{display:flex}
.axisbar__tabs button{width:56px;height:21px;background:#fff;border:1px solid #d9dadd}
.axisbar__add{width:30px;height:21px;border:1px solid #d9dadd;gap:2px}
.pscroll{flex:1;min-height:0;display:flex;padding:0 7px 0 4px}
.settings{flex:1;min-width:0}
.pscroll__bar{flex:none;width:4px;height:488px;margin-top:11px;background:#e7e7ea;border-radius:2px}
.row{display:flex;justify-content:space-between;align-items:center;margin-top:10px;padding-left:4px}
.row--first{padding-top:10px}
.row--top{align-items:flex-start}
.row--sub{padding-left:14px}
.settings h3{height:24px;line-height:24px;margin-top:6px;padding:1px 5px 0 4px;background:#ececec;display:flex;align-items:center;justify-content:space-between}
h3 svg{width:8px;height:4px;color:#aaa}
.w155{width:155px}
.w142{width:142px}
.w61{width:61px}
.seg{display:flex;width:155px;height:22px;border:1px solid #d9dadd;background:#fff}
.seg button{flex:1;padding-top:1px}
.seg--sub{width:142px}
.seg--wide{width:335px}
.row--font{justify-content:flex-start;gap:4px;padding-left:281px}
.sq{width:22px;height:20px;border:1px solid #d9dadd;background:#fff;color:#333}
.sq b{font-family:"DejaVu Sans",sans-serif}
.sq .fontcolor{color:#333;border-color:#666}
.rot{display:flex;gap:6px}
.rot__slide{width:94px}
.rot__nums{display:flex;justify-content:space-between;height:12px;line-height:12px;color:#555;padding:0 5px 0 2px}
.rot__slide input{display:block;appearance:none;width:90px;height:9px;margin:0 0 0 4px;background:linear-gradient(#333,#333) 0 4px/100% 1px no-repeat}
.rot__slide input::-webkit-slider-thumb{appearance:none;width:9px;height:8px;background:linear-gradient(#fff,#fff) center 3px/3px 3px no-repeat #999;clip-path:polygon(50% 0,100% 100%,0 100%)}
.spin{display:flex;width:42px;height:22px;border:1px solid #d9dadd;background:#fff}
.spin input{flex:1;min-width:0;padding-left:3px}
.spin__btns{width:12px;background:#d9dadd;display:flex;flex-direction:column;color:#444}
.spin__btns button{flex:1}
.spin svg{width:9px;height:6px}
.linesel{width:155px;height:20px;border:1px solid #d9dadd;background:#fff}
.linesel i{flex:1;height:1px;background:#000;margin:0 7px 0 3px}
.linesel span{width:18px;height:100%;background:#d9dadd;display:flex;align-items:center;justify-content:center}
.linesel svg{width:10px;height:6px;color:#444}
.linesel--color i{height:100%;margin:0 1px 0 0;background:#b0b0b0}
.linesel--color span{background:#fff;border-left:1px solid #d9dadd}
.popup{position:absolute;left:359px;top:208px;width:60px;height:61px;background:#e0e0e2;border:1px solid #c8c8cc;border-radius:3px 3px 0 0;padding:9px 0 0 11px}
.popup button{height:21px}
.mark{position:absolute;border:3px solid #fd4444;pointer-events:none}
.mark--chart{left:-1px;top:-5px;width:526px;height:380px}
.mark--tab{left:218px;top:64px;width:112px;height:33px}
.mark--grid{left:1px;top:141px;width:117px;height:45px}
.mark--axis{left:1px;top:185px;width:422px;height:86px}
.badge{position:absolute;width:40px;height:40px;border-radius:50%;background:#fd4444;color:#fff;font:28px/40px "Noto Sans",sans-serif;text-align:center}
.badge--1{left:9px;top:2px}
.badge--2{left:173px;top:60px}
.badge--3{left:-42px;top:143px}
.badge--4{left:-42px;top:208px}
```
FILE: sheet.js
```js
const cols = ["A", "B", "C", "D", "E", "F", "G", "H"];
const dots = '<svg class="dots" viewBox="0 0 9 7"><path d="M0 1h2M3.500 1h2M7 1h2M0 3.500h2M3.500 3.500h2M7 3.500h2M0 6h2M3.500 6h2M7 6h2" stroke="#999" stroke-width="1.500"/></svg>';
const cells = "<td></td>".repeat(cols.length);
let html = "<thead><tr><th>" + dots + "</th>";
cols.forEach((c, i) => { html += `<th${i ? "" : ' class="is-cur"'}>${c}</th>`; });
html += "</tr></thead><tbody>";
for (let r = 1; r <= 33; r++) {
  html += `<tr><th${r === 1 ? ' class="is-cur"' : ""}>${r}</th>${cells}</tr>`;
}
html += `<tr><th></th>${cells}</tr></tbody>`;
document.getElementById("grid").innerHTML = html;
```
